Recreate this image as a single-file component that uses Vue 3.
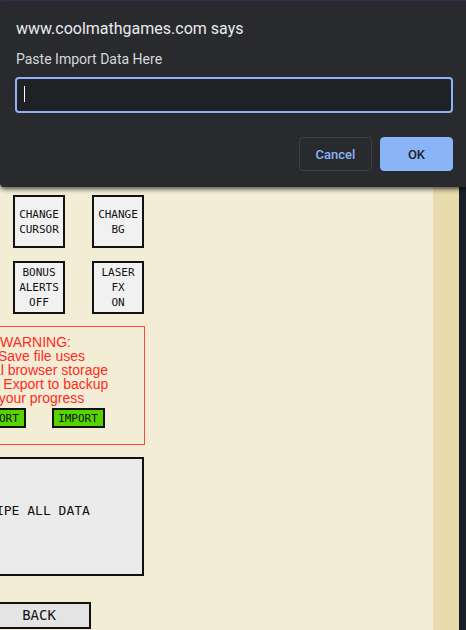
<script setup>
import { ref } from 'vue'

const importData = ref('')
const settings = [
  ['CHANGE', 'CURSOR'],
  ['CHANGE', 'BG'],
  ['BONUS', 'ALERTS', 'OFF'],
  ['LASER', 'FX', 'ON'],
]
</script>

<template>
  <div class="page">
    <main class="game">
      <div class="menu">
        <div class="settings">
          <button v-for="lines in settings" :key="lines.join(' ')" type="button" class="box tile">
            <span v-for="line in lines" :key="line">{{ line }}</span>
          </button>
        </div>
        <section class="warning">
          <p class="title">WARNING:</p>
          <p>Save file uses</p>
          <p>local browser storage</p>
          <p>Use Export to backup</p>
          <p>your progress</p>
          <div class="transfer">
            <button type="button" class="box green">EXPORT</button>
            <button type="button" class="box green">IMPORT</button>
          </div>
        </section>
        <button type="button" class="box wipe">WIPE ALL DATA</button>
        <button type="button" class="box back">BACK</button>
      </div>
    </main>

    <form class="dialog" role="dialog" aria-labelledby="dialog-title" @submit.prevent>
      <h1 id="dialog-title">www.coolmathgames.com says</h1>
      <label for="import-data">Paste Import Data Here</label>
      <div class="field">
        <input id="import-data" v-model="importData" type="text" autocomplete="off" />
        <span class="caret"></span>
      </div>
      <div class="actions">
        <button type="button" class="cancel">Cancel</button>
        <button type="submit" class="ok">OK</button>
      </div>
    </form>
  </div>
</template>

<style>
body {
  margin: 0;
  background: #17202b;
}
</style>

<style scoped>
* {
  box-sizing: border-box;
}

.page {
  position: relative;
  min-height: 100vh;
  overflow: hidden;
  background: #17202b;
}

.game {
  min-height: 100vh;
  margin-right: 7px;
  padding-top: 195px;
  background: #f4edd6;
  border-right: 26px solid #e8dbae;
}

.menu {
  display: flex;
  flex-direction: column;
  width: 210px;
  margin-left: -66px;
}

.box {
  padding: 0;
  border: 2px solid #111;
  background: #f1f1f1;
  color: #111;
  font-family: "DejaVu Sans Mono", "Liberation Mono", monospace;
  font-size: 11px;
  line-height: 15px;
}

.settings {
  display: grid;
  grid-template-columns: 52px 52px;
  justify-content: end;
  gap: 13px 27px;
}

.tile {
  display: flex;
  flex-direction: column;
  align-items: center;
  justify-content: center;
  height: 53px;
}

.warning {
  margin-top: 12px;
  height: 119px;
  padding-top: 8px;
  border: 1px solid #ff4a40;
  margin-right: -1px;
  color: #ff2a22;
  font: 14px/14px "Liberation Sans", Arial, sans-serif;
  text-align: center;
}

.warning p {
  margin: 0;
  padding-left: 4px;
  white-space: nowrap;
}

.warning .title {
  padding: 0 8px 0 0;
}

.transfer {
  display: flex;
  justify-content: center;
  gap: 26px;
  margin-top: 3px;
  padding-right: 2px;
}

.green {
  width: 53px;
  height: 20px;
  background: #55d400;
}

.wipe {
  height: 119px;
  margin-top: 12px;
  padding-bottom: 12px;
  background: #ebebeb;
  font-size: 13px;
}

.back {
  align-self: center;
  width: 104px;
  height: 27px;
  margin-top: 26px;
  background: #e4e4e4;
  font-size: 14px;
}

.dialog {
  position: absolute;
  top: 1px;
  left: 0;
  right: 0;
  padding: 16px 13px 16px 16px;
  border-radius: 4px 0 0 4px;
  background: #292a2d;
  box-shadow: 0 -4px 0 #3a2a4c, 0 2px 5px rgba(0, 0, 0, 0.7);
  color: #e8eaed;
  font-family: Roboto, "Liberation Sans", sans-serif;
}

.dialog h1 {
  margin: 0;
  font-size: 16px;
  font-weight: 400;
  line-height: 24px;
}

.dialog label {
  display: block;
  margin-top: 8px;
  font-size: 14px;
  line-height: 20px;
  color: #d5d7da;
}

.field {
  position: relative;
  margin: 8px 0 24px -1px;
}

.field input {
  display: block;
  width: 100%;
  height: 36px;
  padding: 0 8px;
  border: 2px solid #8ab4f8;
  border-radius: 4px;
  outline: none;
  background: #202124;
  color: #e8eaed;
  font: 13px Roboto, sans-serif;
}

.caret {
  position: absolute;
  top: 9px;
  left: 9px;
  width: 1px;
  height: 16px;
  background: #fff;
}

.actions {
  display: flex;
  justify-content: flex-end;
  gap: 8px;
}

.actions button {
  width: 73px;
  height: 34px;
  padding: 0;
  border: 1px solid #3c4043;
  border-radius: 4px;
  background: transparent;
  color: #8ab4f8;
  font: 500 13px Roboto, sans-serif;
}

.actions .ok {
  border-color: #8ab4f8;
  background: #8ab4f8;
  color: #202124;
}
</style>
